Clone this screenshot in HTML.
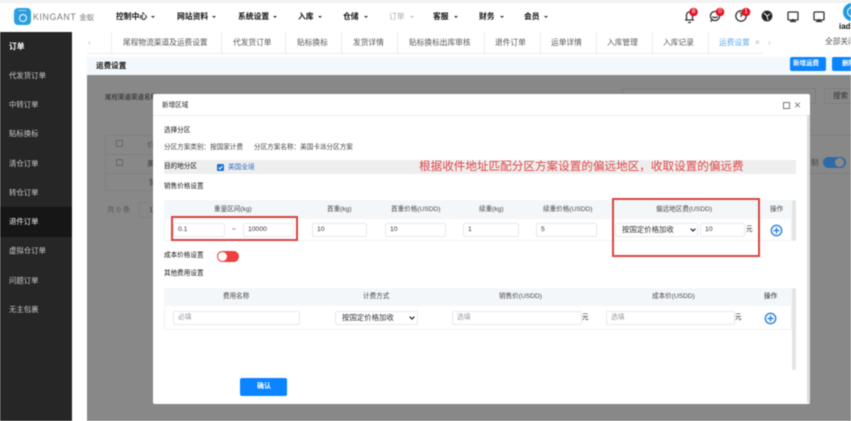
<!DOCTYPE html>
<html><head><meta charset="utf-8">
<style>
html,body{margin:0;padding:0;background:#fff;}
#p{position:relative;width:851px;height:421px;overflow:hidden;background:#fff;font-family:"Liberation Sans","Noto Sans CJK SC",sans-serif;color:#444;filter:blur(0.5px);}
#p div,#p span.t{position:absolute;box-sizing:border-box;}
.t{position:absolute;white-space:nowrap;line-height:10px;font-size:7.5px;}
.n{font-size:7.8px;color:#111;font-weight:bold;top:12px;}
.c{position:absolute;top:16px;width:0;height:0;border-left:2.5px solid transparent;border-right:2.5px solid transparent;border-top:2.5px solid #333;}
.s{font-size:7.4px;color:#ccc;left:9px;}
.tab{font-size:7.7px;color:#555;top:38px;}
.sep{top:32px;width:1px;height:22px;background:#ececec;}
.h{font-size:6.6px;color:#444;text-align:center;}
.i{background:#fff;border:1px solid #e6e9ee;border-radius:2px;height:14px;font-size:6.8px;color:#333;line-height:12px;padding-left:4px;white-space:nowrap;}
.l{font-size:6.6px;color:#222;}
.red{border:2px solid #d9443f;}
</style></head><body><div id="p">

<!-- header -->
<div style="left:0;top:0;width:851px;height:3px;background:#f2f2f2"></div>
<div style="left:14px;top:8px;width:17px;height:17px;border-radius:4px;background:#2a9fe0"></div>
<div style="left:18.5px;top:13.5px;width:8px;height:8px;border-radius:50%;border:1.6px solid #fff"></div>
<div style="left:19px;top:10px;width:7px;height:2px;border-top:1.4px dotted #fff"></div>
<span class="t" style="left:33px;top:12px;font-size:8.8px;color:#777;letter-spacing:.6px">KINGANT <span style="font-size:7.5px;letter-spacing:0">金蚁</span></span>

<span class="t n" style="left:116px">控制中心</span><i class="c" style="left:151px"></i>
<span class="t n" style="left:177px">网站资料</span><i class="c" style="left:212px"></i>
<span class="t n" style="left:238px">系统设置</span><i class="c" style="left:273px"></i>
<span class="t n" style="left:298px">入库</span><i class="c" style="left:318px"></i>
<span class="t n" style="left:343px">仓储</span><i class="c" style="left:364px"></i>
<span class="t n" style="left:389px;color:#aaa;font-weight:normal">订单</span><i class="c" style="left:410px;border-top-color:#bbb"></i>
<span class="t n" style="left:433px">客服</span><i class="c" style="left:454px"></i>
<span class="t n" style="left:479px">财务</span><i class="c" style="left:500px"></i>
<span class="t n" style="left:524px">会员</span><i class="c" style="left:544px"></i>

<!-- icons -->
<svg style="position:absolute;left:680px;top:0" width="171" height="32" viewBox="0 0 171 32" fill="none" stroke="#333" stroke-width="1.3">
<path d="M5 20h9M6.5 20v-5a3 3 0 0 1 6 0v5M8 22.5h3"/>
<circle cx="35" cy="16" r="4.6"/><path d="M32 20l-1.5 1.5"/><path d="M32.500 16.500c1 1.500 4 1.500 5 0"/>
<circle cx="61" cy="16" r="5.2"/><path d="M60 14c1-1.500 3-.5 2 1l-1 1v1"/>
<circle cx="87" cy="16" r="4.8" fill="#222"/><path d="M84 13l3 3 3-2M87 16l1 4" stroke="#fff" stroke-width="1"/>
<rect x="108" y="12" width="10" height="8" rx="1"/><path d="M111 21.500h4l-2-2z" fill="#333"/>
<rect x="134" y="12" width="10" height="8" rx="1"/><path d="M137 21.500h4l-2-2z" fill="#333"/>
<g stroke="none"><circle cx="13.500" cy="12" r="4.300" fill="#e81123"/><circle cx="40" cy="12" r="4.300" fill="#e81123"/><circle cx="66" cy="12" r="4.300" fill="#e81123"/></g>
</svg>
<span class="t" style="left:691.800px;top:7px;font-size:6.500px;color:#fff">8</span>
<span class="t" style="left:718.300px;top:7px;font-size:6.500px;color:#fff">0</span>
<span class="t" style="left:744.300px;top:7px;font-size:6.500px;color:#fff">1</span>
<div style="left:843px;top:3px;width:18px;height:18px;border-radius:50%;background:#1e9be0"></div>
<div style="left:847px;top:7px;width:9px;height:10px;border-radius:50%;border:1.500px solid #fff"></div>
<span class="t" style="left:839px;top:22px;font-size:8px;font-weight:bold;color:#111">iad</span>

<!-- sidebar -->
<div style="left:0;top:32px;width:72px;height:389px;background:#262626"></div>
<div style="left:0;top:207px;width:72px;height:30px;background:#161616"></div>
<span class="t" style="left:9px;top:42px;font-size:7.800px;font-weight:bold;color:#fff">订单</span>
<span class="t s" style="top:71px">代发货订单</span>
<span class="t s" style="top:100px">中转订单</span>
<span class="t s" style="top:129px">贴标换标</span>
<span class="t s" style="top:159px">清仓订单</span>
<span class="t s" style="top:188px">转仓订单</span>
<span class="t s" style="top:217px;color:#eee">退件订单</span>
<span class="t s" style="top:246px">虚拟仓订单</span>
<span class="t s" style="top:276px">问题订单</span>
<span class="t s" style="top:305px">无主包裹</span>

<!-- tabs -->
<div style="left:87px;top:53px;width:676px;height:1px;background:#ececec"></div>
<span class="t" style="left:88px;top:38px;color:#bbb;font-size:8px">‹</span>
<div class="sep" style="left:111px"></div><div class="sep" style="left:221px"></div><div class="sep" style="left:285px"></div><div class="sep" style="left:341px"></div><div class="sep" style="left:397px"></div><div class="sep" style="left:484px"></div><div class="sep" style="left:540px"></div><div class="sep" style="left:596px"></div><div class="sep" style="left:652px"></div><div class="sep" style="left:708px"></div>
<span class="t tab" style="left:123px">尾程物流渠道及运费设置</span>
<span class="t tab" style="left:233px">代发货订单</span>
<span class="t tab" style="left:297px">贴标换标</span>
<span class="t tab" style="left:353px">发货详情</span>
<span class="t tab" style="left:409px">贴标换标出库审核</span>
<span class="t tab" style="left:495px">退件订单</span>
<span class="t tab" style="left:551px">运单详情</span>
<span class="t tab" style="left:607px">入库管理</span>
<span class="t tab" style="left:663px">入库记录</span>
<span class="t tab" style="left:719px;color:#5fa8ec">运费设置</span>
<span class="t" style="left:755px;top:38px;color:#aac;font-size:8px">×</span>
<span class="t" style="left:768px;top:38px;color:#bbb;font-size:8px">›</span>
<span class="t tab" style="left:825px;top:37px">全部关闭</span>

<!-- sub header -->
<div style="left:87px;top:57px;width:764px;height:18px;background:#f3f8fc"></div>
<span class="t" style="left:96px;top:61px;font-size:7.600px;font-weight:bold;color:#111">运费设置</span>
<div style="left:790px;top:57px;width:36px;height:14px;border-radius:2px;background:#0a84ff"></div>
<span class="t" style="left:793px;top:59px;font-size:6.500px;color:#fff;font-weight:bold">新增运费</span>
<div style="left:832px;top:57px;width:24px;height:14px;border-radius:2px;background:#0a84ff"></div>
<span class="t" style="left:842px;top:59px;font-size:6.500px;color:#fff;font-weight:bold">删除</span>

<!-- overlay -->
<div style="left:87px;top:75px;width:764px;height:346px;background:#888"></div>
<span class="t" style="left:105px;top:93px;font-size:6.500px;color:#222">尾程渠道渠道名称</span>
<div style="left:105px;top:135px;width:48px;height:56px;border:1px solid #7f7f7f"></div>
<div style="left:105px;top:154px;width:48px;height:1px;background:#7f7f7f"></div>
<div style="left:105px;top:173px;width:48px;height:1px;background:#7f7f7f"></div>
<div style="left:116px;top:140px;width:7px;height:7px;border:1px solid #666;border-radius:1px"></div>
<div style="left:116px;top:159px;width:7px;height:7px;border:1px solid #666;border-radius:1px"></div>
<span class="t" style="left:147px;top:140px;color:#555">价</span>
<span class="t" style="left:147px;top:159px;color:#333">美</span>
<span class="t" style="left:149px;top:178px;color:#444">暂</span>
<span class="t" style="left:107px;top:205px;color:#555;font-size:7.500px">共 0 条</span>
<div style="left:139px;top:202px;width:14px;height:16px;border:1px solid #7f7f7f;border-radius:2px"></div>
<span class="t" style="left:149px;top:205px;color:#444">1</span>
<div style="left:622px;top:88px;width:194px;height:16px;border:1px solid #7e7e7e;border-radius:2px"></div>
<div style="left:824px;top:88px;width:30px;height:16px;border:1px solid #7e7e7e;border-radius:2px"></div>
<span class="t" style="left:833px;top:91px;color:#333">搜索</span>
<div style="left:810px;top:135px;width:41px;height:1px;background:#7e7e7e"></div>
<div style="left:810px;top:173px;width:41px;height:1px;background:#7e7e7e"></div>
<span class="t" style="left:811px;top:158px;color:#444">制</span>
<div style="left:823px;top:157px;width:23px;height:11px;border-radius:6px;background:#2f6aa8"></div>
<div style="left:835px;top:158px;width:9px;height:9px;border-radius:50%;background:#8a8a8a"></div>

<!-- modal -->
<div style="left:153px;top:94px;width:657px;height:310px;background:#fff;border-radius:2px"></div>
<div style="left:153px;top:115px;width:654px;height:1px;background:#eceef2"></div>
<div style="left:807px;top:115px;width:3px;height:288px;background:#dcdcdc"></div>
<span class="t l" style="left:162px;top:101px">新增区域</span>
<div style="left:783px;top:102px;width:7px;height:7px;border:1px solid #777"></div>
<span class="t" style="left:794px;top:100px;font-size:12px;color:#777;font-weight:normal">×</span>

<span class="t l" style="left:164px;top:126px;color:#111">选择分区</span>
<span class="t l" style="left:164px;top:143px;color:#444">分区方案类别：按国家计费</span>
<span class="t l" style="left:254px;top:143px;color:#444">分区方案名称：美国卡派分区方案</span>

<div style="left:164px;top:160px;width:632px;height:14px;background:#eeeeee"></div>
<span class="t l" style="left:164px;top:162px;color:#111">目的地分区</span>
<div style="left:217px;top:164px;width:7px;height:7px;background:#1a6fd0;border-radius:1px"></div>
<svg style="position:absolute;left:217px;top:164px" width="7" height="7"><path d="M1.500 3.500l1.500 1.500 2.500-3" stroke="#fff" fill="none" stroke-width="1"/></svg>
<span class="t" style="left:228px;top:163px;font-size:6.700px;color:#2f70c4">美国全境</span>
<span class="t" style="left:419px;top:161px;line-height:12px;font-size:11.600px;color:#e04545">根据收件地址匹配分区方案设置的偏远地区，收取设置的偏远费</span>

<span class="t l" style="left:164px;top:182px;color:#111">销售价格设置</span>

<!-- table 1 -->
<div style="left:164px;top:200px;width:628px;height:41px;border:1px solid #f1f3f6"></div>
<div style="left:164px;top:200px;width:628px;height:19px;background:#f4f7fa"></div>
<div style="left:792px;top:200px;width:4px;height:41px;background:#e4e4e4;border-radius:2px"></div>
<span class="t h" style="left:214px;top:205px">重量区间(kg)</span>
<span class="t h" style="left:327px;top:205px">首重(kg)</span>
<span class="t h" style="left:391px;top:205px">首重价格(USDD)</span>
<span class="t h" style="left:479px;top:205px">续重(kg)</span>
<span class="t h" style="left:543px;top:205px">续重价格(USDD)</span>
<span class="t h" style="left:656px;top:205px">偏远地区费(USDD)</span>
<span class="t h" style="left:770px;top:205px">操作</span>

<div class="i" style="left:173px;top:223px;width:52px">0.1</div>
<span class="t l" style="left:232px;top:225px">~</span>
<div class="i" style="left:243px;top:223px;width:51px">10000</div>
<div class="i" style="left:312px;top:223px;width:55px">10</div>
<div class="i" style="left:385px;top:223px;width:61px">10</div>
<div class="i" style="left:463px;top:223px;width:56px">1</div>
<div class="i" style="left:536px;top:223px;width:61px">5</div>
<div class="i" style="left:615px;top:223px;width:83px;padding-left:6px;font-size:7.400px">按国定价格加收</div>
<svg style="position:absolute;left:690px;top:228px" width="6" height="4"><path d="M.7.700L3 3 5.300.7" stroke="#222" stroke-width="1.200" fill="none"/></svg>
<div class="i" style="left:700px;top:223px;width:45px">10</div>
<span class="t l" style="left:746px;top:225px">元</span>
<svg style="position:absolute;left:770px;top:224px" width="13" height="13" fill="none" stroke="#2a84e0" stroke-width="1.400"><circle cx="6.500" cy="6.500" r="5.200"/><path d="M3.500 6.500h6M6.500 3.500v6"/></svg>

<div class="red" style="left:171px;top:216px;width:127px;height:25px"></div>
<div class="red" style="left:612px;top:198px;width:148px;height:59px"></div>

<span class="t l" style="left:164px;top:251px;color:#111">成本价格设置</span>
<div style="left:217px;top:251px;width:22px;height:11px;border-radius:6px;background:#ef4040"></div>
<div style="left:218px;top:252px;width:9px;height:9px;border-radius:50%;background:#fff"></div>
<span class="t l" style="left:164px;top:269px;color:#111">其他费用设置</span>

<!-- table 2 -->
<div style="left:164px;top:288px;width:628px;height:42px;border:1px solid #f1f3f6"></div>
<div style="left:164px;top:288px;width:628px;height:18px;background:#f4f7fa"></div>
<div style="left:792px;top:288px;width:4px;height:82px;background:#e4e4e4;border-radius:2px"></div>
<span class="t h" style="left:223px;top:292px">费用名称</span>
<span class="t h" style="left:363px;top:292px">计费方式</span>
<span class="t h" style="left:499px;top:292px">销售价(USDD)</span>
<span class="t h" style="left:652px;top:292px">成本价(USDD)</span>
<span class="t h" style="left:764px;top:292px;color:#222">操作</span>

<div class="i" style="left:173px;top:311px;width:127px;color:#999">必填</div>
<div class="i" style="left:335px;top:311px;width:83px;padding-left:6px;font-size:7.400px">按国定价格加收</div>
<svg style="position:absolute;left:409px;top:316px" width="6" height="4"><path d="M.7.700L3 3 5.300.7" stroke="#222" stroke-width="1.200" fill="none"/></svg>
<div class="i" style="left:452px;top:311px;width:130px;color:#999">选填</div>
<span class="t l" style="left:582px;top:313px">元</span>
<div class="i" style="left:606px;top:311px;width:129px;color:#999">选填</div>
<span class="t l" style="left:735px;top:313px">元</span>
<svg style="position:absolute;left:764px;top:312px" width="13" height="13" fill="none" stroke="#2a84e0" stroke-width="1.400"><circle cx="6.500" cy="6.500" r="5.200"/><path d="M3.500 6.500h6M6.500 3.500v6"/></svg>

<div style="left:240px;top:378px;width:47px;height:18px;background:#0a84ff;border-radius:2px"></div>
<span class="t" style="left:257px;top:382px;font-size:7px;color:#fff;font-weight:bold">确认</span>

</div></body></html>
